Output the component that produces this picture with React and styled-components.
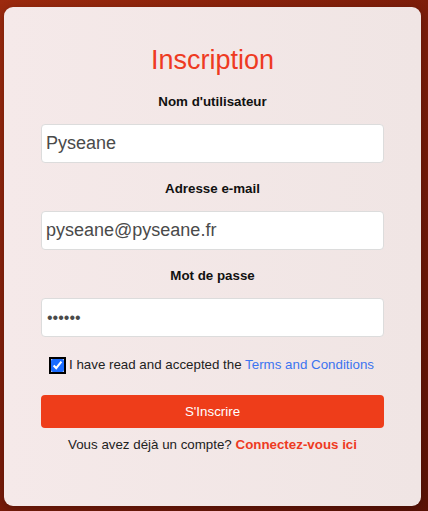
import styled, { createGlobalStyle } from "styled-components";

const GlobalStyle = createGlobalStyle`
  html, body {
    margin: 0;
    padding: 0;
  }
  body {
    font-family: "Liberation Sans", Arial, sans-serif;
    background: linear-gradient(135deg, #9c2a0e 0%, #7a1c0a 50%, #5a1206 100%);
    min-height: 511px;
  }
`;

const Page = styled.div`
  padding: 7px 7px 5px 4px;
  box-sizing: border-box;
  height: 511px;
`;

const Card = styled.form`
  height: 100%;
  box-sizing: border-box;
  border-radius: 9px;
  background: linear-gradient(90deg, #f5e9e9 0%, #f0e5e4 100%);
  box-shadow: 0 2px 8px rgba(0, 0, 0, 0.25);
  padding: 36px 37px 0 37px;
  display: flex;
  flex-direction: column;
  align-items: stretch;
`;

const Title = styled.h1`
  margin: 0 0 17px;
  text-align: center;
  font-weight: 400;
  font-size: 27px;
  line-height: 34px;
  color: #ee3a22;
`;

const Label = styled.label`
  display: block;
  text-align: center;
  font-weight: 700;
  font-size: 13.33px;
  line-height: 15px;
  color: #111;
  margin-bottom: 15px;
`;

const Input = styled.input`
  display: block;
  width: 100%;
  box-sizing: border-box;
  height: 39px;
  padding: 0 4px;
  padding-left: ${(p) => (p.type === "password" ? "5px" : "4px")};
  border: 1px solid #dcdcdc;
  border-radius: 4px;
  background: #fff;
  font-family: "Liberation Sans", Arial, sans-serif;
  font-size: ${(p) => (p.type === "password" ? "16px" : "18px")};
  color: #4a4a4a;
  margin-bottom: 18px;
  outline: none;
`;

const CheckRow = styled.div`
  display: flex;
  align-items: center;
  justify-content: center;
  gap: 5px;
  font-size: 13.33px;
  line-height: 16px;
  color: #222;
  margin-top: 2px;
`;

const Check = styled.input`
  margin: 0;
  width: 13px;
  height: 13px;
  accent-color: #1a6cff;
  outline: 2px solid #000;
  outline-offset: 0;
`;

const TermsLink = styled.a`
  color: #3b74f0;
  text-decoration: none;
`;

const Submit = styled.button`
  margin-top: 22px;
  height: 33px;
  width: 100%;
  border: none;
  border-radius: 4px;
  background: #ee3d1a;
  color: #fff;
  font-family: "Liberation Sans", Arial, sans-serif;
  font-size: 13.33px;
`;

const Footer = styled.p`
  margin: 9px 0 0;
  text-align: center;
  font-size: 13.33px;
  line-height: 16px;
  color: #222;
`;

const LoginLink = styled.a`
  color: #ee3a22;
  font-weight: 700;
  text-decoration: none;
`;

export default function App() {
  return (
    <>
      <GlobalStyle />
      <Page>
        <Card onSubmit={(e) => e.preventDefault()}>
          <Title>Inscription</Title>
          <Label htmlFor="username">Nom d'utilisateur</Label>
          <Input id="username" type="text" defaultValue="Pyseane" />
          <Label htmlFor="email">Adresse e-mail</Label>
          <Input id="email" type="email" defaultValue="pyseane@pyseane.fr" />
          <Label htmlFor="password">Mot de passe</Label>
          <Input id="password" type="password" defaultValue="secret" />
          <CheckRow>
            <Check type="checkbox" defaultChecked />
            <span>
              I have read and accepted the{" "}
              <TermsLink href="#">Terms and Conditions</TermsLink>
            </span>
          </CheckRow>
          <Submit type="submit">S'Inscrire</Submit>
          <Footer>
            Vous avez déjà un compte?{" "}
            <LoginLink href="#">Connectez-vous ici</LoginLink>
          </Footer>
        </Card>
      </Page>
    </>
  );
}
